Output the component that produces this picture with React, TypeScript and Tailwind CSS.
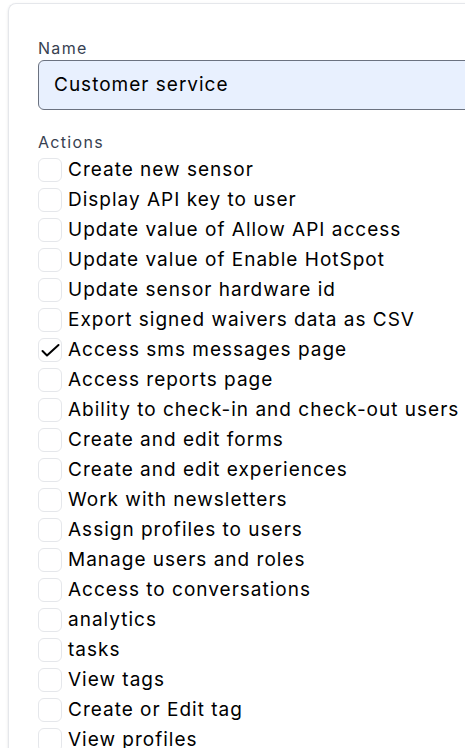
import React from "react";

const actions = [
  "Create new sensor",
  "Display API key to user",
  "Update value of Allow API access",
  "Update value of Enable HotSpot",
  "Update sensor hardware id",
  "Export signed waivers data as CSV",
  "Access sms messages page",
  "Access reports page",
  "Ability to check-in and check-out users",
  "Create and edit forms",
  "Create and edit experiences",
  "Work with newsletters",
  "Assign profiles to users",
  "Manage users and roles",
  "Access to conversations",
  "analytics",
  "tasks",
  "View tags",
  "Create or Edit tag",
  "View profiles",
];

export default function App() {
  return (
    <div
      className="h-[748px] w-[465px] overflow-hidden bg-white pl-2 pt-[3px]"
      style={{ fontFamily: "Inter, 'Noto Sans', sans-serif" }}
    >
      <div className="h-[800px] w-[500px] rounded-tl-lg border-l border-t border-[#e5e7eb] pl-[29px] pt-[34px] shadow-sm">
        <div className="text-[16px] leading-[20px] tracking-[1.3px] text-[#374151]">Name</div>
        <div className="mt-[2px] flex h-[50px] w-[480px] items-center rounded-md border border-[#6b7280] bg-[#e8f0fe] pl-[15px] text-[19px] tracking-[1px] text-black">
          Customer service
        </div>
        <div className="mt-[22px] text-[16px] leading-[20px] tracking-[1.3px] text-[#374151]">Actions</div>
        <div className="mt-[3px] flex flex-col">
          {actions.map((a, i) => (
            <div key={a} className="flex h-[30px] items-center gap-[6px]">
              <div className="relative h-[24px] w-[24px] shrink-0 rounded-md border border-[#e5e7eb] bg-white">
                {i === 6 && (
                  <svg className="absolute -left-px -top-px" width="24" height="24" viewBox="0 0 24 24" fill="none">
                    <path d="M4.5 13 L9 17.5 L20.5 7" stroke="#000" strokeWidth="2" strokeLinecap="round" strokeLinejoin="round" />
                  </svg>
                )}
              </div>
              <span className="whitespace-nowrap text-[19px] tracking-[1px] text-black">{a}</span>
            </div>
          ))}
        </div>
      </div>
    </div>
  );
}
